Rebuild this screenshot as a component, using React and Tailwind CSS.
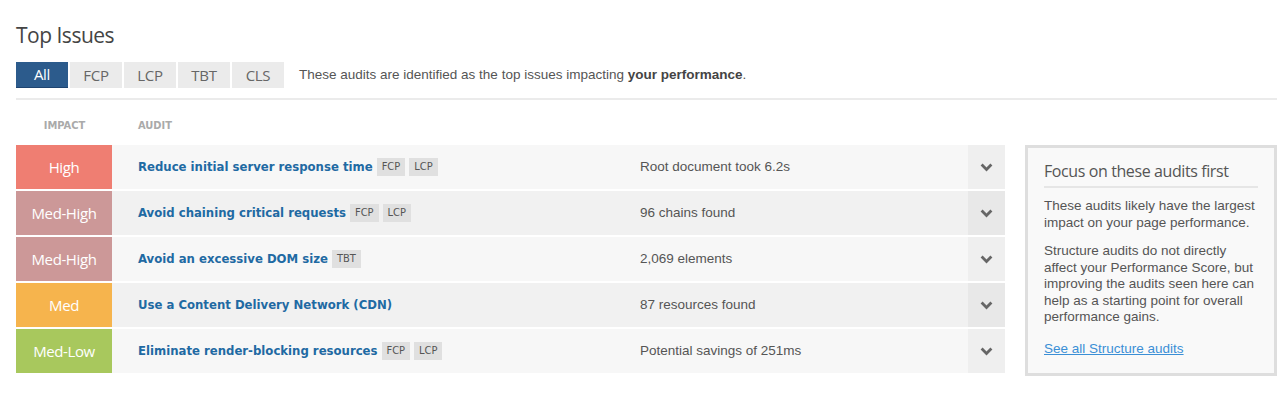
import React from 'react';

const rows = [
    { impact: 'High', color: 'bg-[#ef7e72]', title: 'Reduce initial server response time', tags: ['FCP', 'LCP'], detail: 'Root document took 6.2s' },
    { impact: 'Med-High', color: 'bg-[#cc9898]', title: 'Avoid chaining critical requests', tags: ['FCP', 'LCP'], detail: '96 chains found' },
    { impact: 'Med-High', color: 'bg-[#cc9898]', title: 'Avoid an excessive DOM size', tags: ['TBT'], detail: '2,069 elements' },
    { impact: 'Med', color: 'bg-[#f6b44d]', title: 'Use a Content Delivery Network (CDN)', tags: [], detail: '87 resources found' },
    { impact: 'Med-Low', color: 'bg-[#a8c85d]', title: 'Eliminate render-blocking resources', tags: ['FCP', 'LCP'], detail: 'Potential savings of 251ms' },
];

const tabs = ['All', 'FCP', 'LCP', 'TBT', 'CLS'];

const Chevron = () => (
    <svg width="13" height="9" viewBox="0 0 13 9">
        <path d="M1.6 1.6 L6.5 6.5 L11.4 1.6" fill="none" stroke="#666" strokeWidth="2.8" />
    </svg>
);

const App = () => {
    return (
        <div className="w-[1280px] h-[410px] bg-white pl-4 pr-[3px] pt-[22px] font-['Liberation_Sans',Arial,sans-serif] text-[#555]">
            {/* Heading */}
            <h2 className="text-[21px] leading-[26px] text-[#444] font-['Open_Sans',sans-serif] tracking-[-0.5px]">Top Issues</h2>

            {/* Tabs */}
            <div className="flex items-center mt-[14px] h-[26px]">
                <div className="flex gap-[2px]">
                    {tabs.map((t, i) => (
                        <div
                            key={t}
                            className={`w-[52px] h-[26px] flex items-center justify-center text-[15px] tracking-[-0.3px] font-['Open_Sans',sans-serif] ${i === 0 ? 'bg-[#2c5b8c] text-white border-b border-[#1e4470]' : 'bg-[#ebebeb] text-[#666]'}`}
                        >
                            {t}
                        </div>
                    ))}
                </div>
                <p className="ml-[15px] text-[13.5px] text-[#555] font-['Liberation_Sans',Arial,sans-serif]">
                    These audits are identified as the top issues impacting <b className="text-[#444]">your performance</b>.
                </p>
            </div>

            <div className="mt-[10px] h-[2px] bg-[#ebebeb]" />

            <div className="flex mt-[19px]">
                {/* Table */}
                <div className="w-[989px] shrink-0">
                    <div className="flex h-[26px] text-[11px] font-bold text-[#aaa] font-['DejaVu_Sans_Condensed','DejaVu_Sans',sans-serif] leading-[14px]">
                        <div className="w-[97px] text-center">IMPACT</div>
                        <div className="pl-[25px]">AUDIT</div>
                    </div>
                    <div className="flex flex-col gap-[2px]">
                        {rows.map((r, i) => (
                            <div key={i} className={`flex h-[44px] ${i % 2 === 0 ? 'bg-[#f7f7f7]' : 'bg-[#f1f1f1]'}`}>
                                <div className={`w-[96px] mr-[1px] ${r.color} flex items-center justify-center text-white text-[15px] font-['Open_Sans',sans-serif] tracking-[-0.4px]`}>
                                    {r.impact}
                                </div>
                                <div className="w-[527px] pl-[25px] flex items-center">
                                    <span className="text-[#1f6aa3] font-bold text-[13px] font-['DejaVu_Sans_Condensed','DejaVu_Sans',sans-serif]">{r.title}</span>
                                    {r.tags.map((tag) => (
                                        <span key={tag} className="ml-[4px] bg-[#e0e0e0] text-[#555] text-[11px] font-['DejaVu_Sans_Condensed','DejaVu_Sans',sans-serif] px-[5px] h-[18px] leading-[18px]">
                                            {tag}
                                        </span>
                                    ))}
                                </div>
                                <div className="flex-1 flex items-center text-[13.5px] text-[#555]">{r.detail}</div>
                                <div className={`w-[37px] flex items-center justify-center ${i % 2 === 0 ? 'bg-[#efefef]' : 'bg-[#e8e8e8]'}`}>
                                    <Chevron />
                                </div>
                            </div>
                        ))}
                    </div>
                </div>

                {/* Side panel */}
                <div className="ml-[20px] mt-[26px] w-[252px] h-[231px] shrink-0 border-[3px] border-[#dedede] bg-[#f9f9f9] px-[16px] pt-[12px]">
                    <h3 className="text-[16px] leading-[22px] text-[#555] font-['Open_Sans',sans-serif] tracking-[-0.4px] pb-[4px] border-b-2 border-[#e6e6e6]">
                        Focus on these audits first
                    </h3>
                    <p className="mt-[9px] text-[13.5px] leading-[17px] text-[#555]">
                        These audits likely have the largest impact on your page performance.
                    </p>
                    <p className="mt-[12px] text-[13.5px] leading-[16.5px] text-[#555]">
                        Structure audits do not directly affect your Performance Score, but improving the audits seen here can help as a starting point for overall performance gains.
                    </p>
                    <a href="#" className="block mt-[13px] text-[13.5px] text-[#3b8fd6] underline">See all Structure audits</a>
                </div>
            </div>
        </div>
    );
};

export default App;
